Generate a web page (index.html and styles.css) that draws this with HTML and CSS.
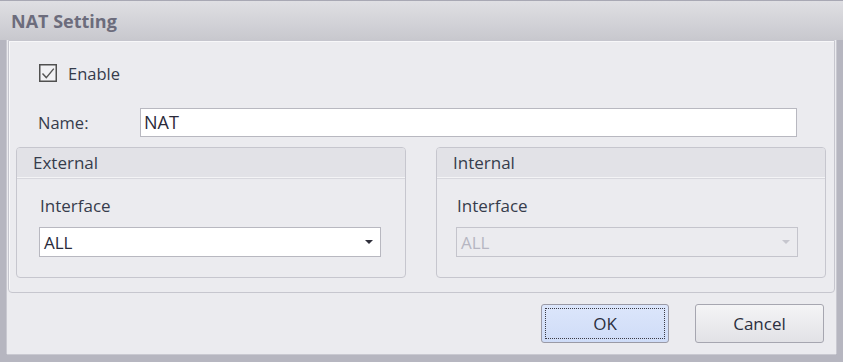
FILE: index.html
```html
<!DOCTYPE html>
<html lang="en">
  <head>
    <meta charset="UTF-8" />
    <meta name="viewport" content="width=device-width, initial-scale=1.0" />
    <title>NAT Setting</title>
    <link rel="stylesheet" href="styles.css">
  </head>
  <body>
    <div class="window">
      <div class="titlebar">NAT Setting</div>
      <div class="frame">
        <div class="panel">
          <label class="enable-row">
            <span class="checkbox">
              <svg width="18" height="18" viewBox="0 0 18 18">
                <rect x="0.75" y="0.75" width="16.5" height="16.5" fill="#f1f1f4" stroke="#505050" stroke-width="1.5" />
                <path d="M3.5 9.5 L7.3 13.6 L14.8 4.6" fill="none" stroke="#555" stroke-width="1.4" />
              </svg>
            </span>
            <span>Enable</span>
          </label>

          <div class="name-row">
            <span class="name-label">Name:</span>
            <div class="textbox">NAT</div>
          </div>

          <div class="groups">
            <div class="group">
              <div class="group-head">External</div>
              <div class="group-body">
                <div class="field-label">Interface</div>
                <div class="combo">
                  <span>ALL</span>
                  <span class="arrow"></span>
                </div>
              </div>
            </div>
            <div class="group group-right">
              <div class="group-head">Internal</div>
              <div class="group-body">
                <div class="field-label">Interface</div>
                <div class="combo disabled">
                  <span>ALL</span>
                  <span class="arrow"></span>
                </div>
              </div>
            </div>
          </div>
        </div>

        <div class="footer">
          <button class="btn btn-default">OK</button>
          <button class="btn">Cancel</button>
        </div>
      </div>
    </div>
  </body>
</html>
```

FILE: styles.css
```css
* {
  padding: 0;
  margin: 0;
  box-sizing: border-box;
}
body {
  width: 843px;
  height: 362px;
  overflow: hidden;
  font-family: "Open Sans", "Noto Sans", sans-serif;
  font-size: 17px;
  color: #363c4c;
}
.window {
  display: flex;
  flex-direction: column;
  height: 100%;
  background: #b6b6c0;
}
.titlebar {
  height: 40px;
  line-height: 40px;
  padding-left: 11px;
  font-size: 18px;
  font-weight: bold;
  color: #6c6c7c;
  background: linear-gradient(to bottom, #dfdfe3, #c8c8ce);
  border-top: 1px solid #a8a8b4;
}
.frame {
  flex: 1;
  display: flex;
  flex-direction: column;
  margin: 0 7px 8px;
  background: #ebebef;
  box-shadow: -1px 0 0 #c9c9d1, 1px 0 0 #c9c9d1, 0 1px 0 #c9c9d1;
}
.panel {
  margin: 0 1px;
  height: 253px;
  padding: 0 8px 0 7px;
  border: 1px solid #c6c6ce;
  border-radius: 0 0 4px 4px;
  box-shadow: inset 1px 1px 0 #f7f7f9;
}
.enable-row {
  display: flex;
  align-items: center;
  height: 18px;
  margin-top: 23px;
  padding-left: 23px;
  gap: 11px;
  font-size: 16.5px;
}
.checkbox {
  display: flex;
}
.name-row {
  display: flex;
  align-items: center;
  margin-top: 26px;
  padding: 0 29px 0 22px;
}
.name-label {
  width: 102px;
  font-size: 16.5px;
}
.textbox {
  flex: 1;
  height: 29px;
  line-height: 27px;
  padding-left: 3px;
  background: #fff;
  border: 1px solid #b8b8c0;
  font-size: 18px;
  color: #2a2a3a;
}
.groups {
  display: grid;
  grid-template-columns: 1fr 1fr;
  gap: 30px;
  margin-top: 10px;
}
.group {
  height: 131px;
  border: 1px solid #c6c6ce;
  border-radius: 4px;
  overflow: hidden;
}
.group-head {
  height: 30px;
  line-height: 30px;
  padding-left: 16px;
  background: #e2e2e7;
  border-bottom: 1px solid #f4f4f6;
  box-shadow: 0 1px 0 #d8d8de;
}
.group-body {
  padding: 15px 24px 0 22px;
}
.group-right .group-body {
  padding: 15px 27px 0 19px;
}
.field-label {
  height: 26px;
  line-height: 26px;
  margin-left: 1px;
}
.combo {
  display: flex;
  align-items: center;
  justify-content: space-between;
  height: 30px;
  margin-top: 8px;
  padding: 0 7px 0 4px;
  background: #fff;
  border: 1px solid #b8b8c0;
  color: #2a2a3a;
}
.arrow {
  width: 0;
  height: 0;
  border-left: 4.5px solid transparent;
  border-right: 4.5px solid transparent;
  border-top: 4px solid #2f2f3a;
}
.combo.disabled {
  background: #ebebef;
  border-color: #c4c4cc;
  color: #b6b6c2;
}
.combo.disabled .arrow {
  border-top-color: #c6c6ce;
}
.footer {
  flex: 1;
  display: flex;
  justify-content: flex-end;
  gap: 26px;
  padding: 11px 12px 0 0;
}
.btn {
  width: 129px;
  height: 39px;
  font-family: inherit;
  font-size: 17px;
  color: #2b2f3e;
  background: linear-gradient(to bottom, #f4f4f6, #e2e2e6);
  border: 1px solid #a6a6b0;
  border-radius: 3px;
}
.btn-default {
  width: 128px;
  background: linear-gradient(to bottom, #dce6fb, #cfdcf7);
  border-color: #9a9aa6;
  outline: 1px dotted #3a3a44;
  outline-offset: -5px;
}
```
